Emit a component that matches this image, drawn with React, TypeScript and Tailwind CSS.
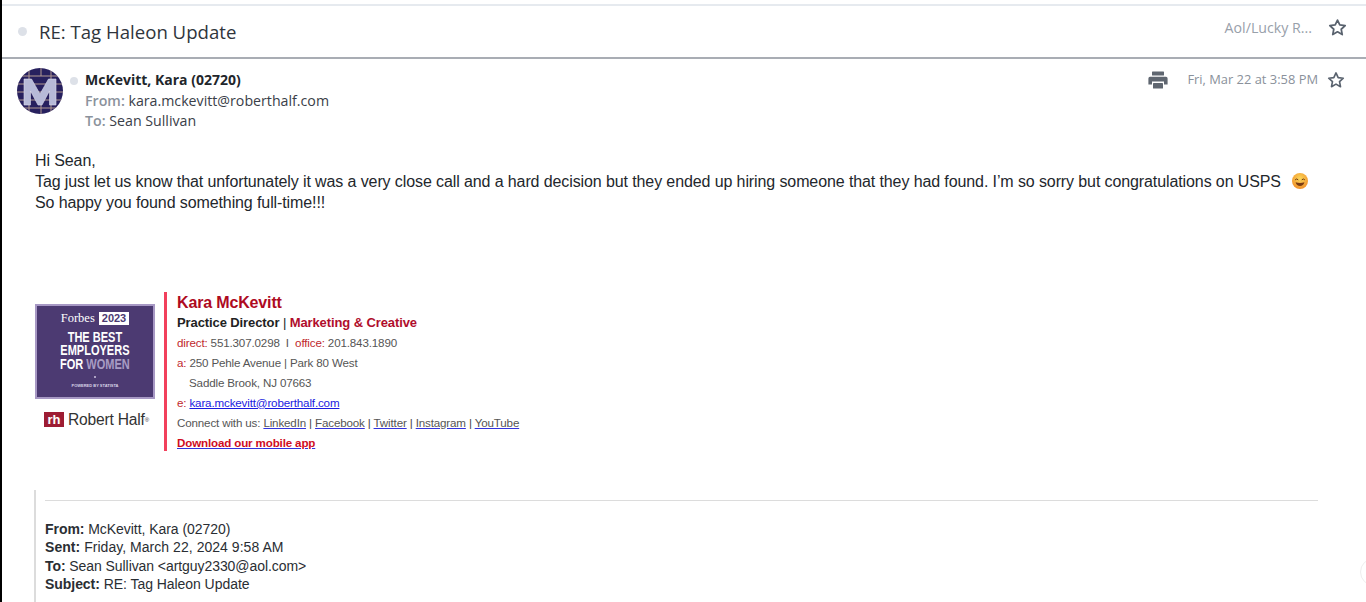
import React from "react";

const Star = ({ size = 18 }: { size?: number }) => (
  <svg width={size} height={size} viewBox="0 0 24 24" fill="none" stroke="#59626e" strokeWidth="2.2" strokeLinejoin="round">
    <path d="M12 2.6l2.9 6.2 6.8.8-5 4.6 1.3 6.7-6-3.4-6 3.4 1.3-6.7-5-4.6 6.8-.8z" />
  </svg>
);

const Printer = () => (
  <svg width="20" height="18" viewBox="0 0 20 18" fill="#5f6670">
    <rect x="4" y="0.5" width="12" height="4" rx="0.6" />
    <path d="M2 5.8h16a1.6 1.6 0 0 1 1.6 1.6v6.2H16v-3H4v3H.4V7.400A1.600 1.600 0 0 1 2 5.800z" />
    <rect x="5" y="12" width="10" height="5.500" rx="0.6" />
  </svg>
);

const Avatar = () => (
  <svg width="46" height="46" viewBox="0 0 46 46" className="shrink-0">
    <defs>
      <clipPath id="avatar-circle">
        <circle cx="23" cy="23" r="23" />
      </clipPath>
    </defs>
    <g clipPath="url(#avatar-circle)">
      <rect width="46" height="46" fill="#27205e" />
      <g stroke="#b39a92" strokeWidth="1">
        <path d="M0 8h46M0 16h46M0 24h46M0 32h46M0 40h46" />
        <path d="M12 0v46M24 0v8M34 0v46M24 32v14" />
      </g>
      <path d="M7 37V11h7.500l8.500 15 8.500-15H39v26h-6.500V23l-7.500 14h-4l-7.500-14v14z" fill="#b7bad8" stroke="#dcdcec" strokeWidth="0.6" />
    </g>
  </svg>
);

const Smile = () => (
  <svg width="16" height="16" viewBox="0 0 16 16" className="ml-[7px] inline-block align-[-2px]">
    <defs>
      <radialGradient id="smile-face" cx="50%" cy="35%" r="70%">
        <stop offset="0%" stopColor="#fbd75b" />
        <stop offset="100%" stopColor="#f08a24" />
      </radialGradient>
    </defs>
    <circle cx="8" cy="8" r="8" fill="url(#smile-face)" />
    <path d="M3.400 6.600q1.300-1.600 2.600 0M10 6.600q1.300-1.600 2.600 0" fill="none" stroke="#6b3a10" strokeWidth="1" strokeLinecap="round" />
    <path d="M3.600 9.200q4.400 1.600 8.800 0q-1 3.800-4.400 3.800t-4.400-3.800z" fill="#7a3b12" />
  </svg>
);

const Sep = () => <span className="text-[#444]"> | </span>;

const Lnk = ({ children }: { children: React.ReactNode }) => (
  <a className="text-[#555] underline decoration-[#3333dd]">{children}</a>
);

export default function App() {
  return (
    <div className="h-[602px] w-[1366px] overflow-hidden bg-white border-l-2 border-black relative font-['Liberation_Sans',Arial,sans-serif]">
      <div className="mt-1 h-[2px] bg-[#e6eaef]" />
      <header className="flex h-[51px] items-center justify-between pl-[16px] pr-[19px] font-['Open_Sans',sans-serif]">
        <div className="flex items-center">
          <span className="h-[9px] w-[9px] rounded-full bg-[#dde1e8]" />
          <span className="ml-[12px] text-[18.600px] text-[#2f353c]">RE: Tag Haleon Update</span>
        </div>
        <div className="flex items-center gap-[16px] pb-[8px]">
          <span className="text-[14.200px] text-[#98a0aa]">Aol/Lucky R...</span>
          <Star size={19} />
        </div>
      </header>
      <div className="h-[2px] bg-[#a9adb4]" />

      <section className="flex justify-between pl-[15px] pr-[21px] pt-[9px] font-['Open_Sans',sans-serif]">
        <div className="flex">
          <Avatar />
          <span className="ml-[7px] mt-[9px] h-[8px] w-[8px] rounded-full bg-[#dde1e8]" />
          <div className="ml-[7px] pt-[2px] text-[14.200px] leading-[20.500px] text-[#3a4048]">
            <div className="text-[14px] font-bold text-[#22262b]">McKevitt, Kara (02720)</div>
            <div>
              <span className="font-semibold text-[#8b929c]">From: </span>kara.mckevitt@roberthalf.com
            </div>
            <div>
              <span className="font-semibold text-[#8b929c]">To: </span>Sean Sullivan
            </div>
          </div>
        </div>
        <div className="flex items-center self-start pt-[2px]">
          <Printer />
          <span className="ml-[19px] text-[12.900px] text-[#8a919b]">Fri, Mar 22 at 3:58 PM</span>
          <span className="ml-[9px]">
            <Star size={18} />
          </span>
        </div>
      </section>

      <main className="pl-[33px] pt-[18px]">
        <div className="text-[16px] leading-[21px] tracking-[-0.105px] text-[#23272c]">
          <p>Hi Sean,</p>
          <p>
            Tag just let us know that unfortunately it was a very close call and a hard decision but they ended up hiring someone that they had found. I’m so sorry but congratulations on USPS <Smile />
          </p>
          <p>So happy you found something full-time!!!</p>
        </div>

        <div className="mt-[79px] flex">
          <div className="flex w-[120px] flex-col pt-[12px]">
            <div className="flex h-[95px] w-[120px] flex-col items-center border-[2px] border-[#a798c4] bg-[#4c3a72] pt-[5px] text-white">
              <div className="flex items-center gap-[4px]">
                <span className="font-['Liberation_Serif',serif] text-[12.500px] leading-[15px]">Forbes</span>
                <span className="bg-white px-[3px] text-[11px] font-bold leading-[13px] text-[#4c3a72]">2023</span>
              </div>
              <div className="mt-[5px] text-center text-[14.500px] font-bold leading-[13.500px] [transform:scaleX(0.76)]">
                <div>THE BEST</div>
                <div>EMPLOYERS</div>
                <div>
                  FOR <span className="text-[#a89cc4]">WOMEN</span>
                </div>
              </div>
              <span className="mt-[5px] h-[2px] w-[2px] rounded-full bg-[#cfc6e0]" />
              <span className="mt-[5px] text-[4px] font-bold leading-[5px] text-[#d8d2e6]">POWERED BY STATISTA</span>
            </div>
            <div className="ml-[9px] mt-[12px] flex items-center">
              <span className="flex h-[15px] w-[20px] items-center justify-center bg-[#9d1c33] text-[13px] font-bold leading-none text-white">rh</span>
              <span className="ml-[4px] text-[15.600px] leading-[18px] tracking-[-0.2px] text-[#333]">
                Robert Half<sup className="text-[6px]">®</sup>
              </span>
            </div>
          </div>

          <div className="ml-[9px] h-[159px] border-l-[3px] border-[#f2405c] pl-[10px] pt-[1px] text-[11.600px] leading-[20px] tracking-[-0.15px] text-[#555]">
            <div className="text-[16px] font-bold leading-[20px] text-[#ae0a1f]">Kara McKevitt</div>
            <div className="text-[13px] font-bold tracking-[-0.1px] text-[#222]">
              Practice Director <span className="font-normal">|</span> <span className="text-[#b00d2c]">Marketing &amp; Creative</span>
            </div>
            <div>
              <span className="text-[#c0272d]">direct:</span> 551.307.0298&nbsp; I&nbsp; <span className="text-[#c0272d]">office:</span> 201.843.1890
            </div>
            <div>
              <span className="text-[#c0272d]">a:</span> 250 Pehle Avenue | Park 80 West
            </div>
            <div className="pl-[12px]">Saddle Brook, NJ 07663</div>
            <div>
              <span className="text-[#c0272d]">e:</span> <a className="text-[#1a1ae0] underline">kara.mckevitt@roberthalf.com</a>
            </div>
            <div>
              Connect with us: <Lnk>LinkedIn</Lnk>
              <Sep />
              <Lnk>Facebook</Lnk>
              <Sep />
              <Lnk>Twitter</Lnk>
              <Sep />
              <Lnk>Instagram</Lnk>
              <Sep />
              <Lnk>YouTube</Lnk>
            </div>
            <div>
              <a className="font-bold text-[#d00c1e] underline decoration-[#3333dd]">Download our mobile app</a>
            </div>
          </div>
        </div>

        <div className="-ml-[1px] mt-[39px] h-[120px] w-[1284px] border-l-[2px] border-[#dcdcdc] pl-[9px] pt-[10px]">
          <div className="h-px bg-[#dcdcdc]" />
          <div className="mt-[19px] text-[14px] leading-[18.500px] tracking-[-0.05px] text-[#2a2e33]">
            <div>
              <b>From:</b> McKevitt, Kara (02720)
            </div>
            <div className="tracking-[0.04px]">
              <b>Sent:</b> Friday, March 22, 2024 9:58 AM
            </div>
            <div className="tracking-[-0.07px]">
              <b>To:</b> Sean Sullivan &lt;artguy2330@aol.com&gt;
            </div>
            <div>
              <b>Subject:</b> RE: Tag Haleon Update
            </div>
          </div>
        </div>
      </main>

      <span className="absolute right-[-22px] top-[558px] h-[28px] w-[28px] rounded-full border border-[#eeeeee] bg-white" />
    </div>
  );
}
